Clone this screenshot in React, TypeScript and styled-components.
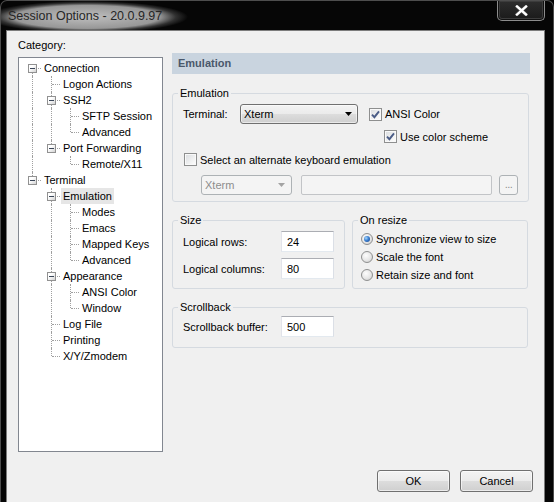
import React from 'react'
import styled, { createGlobalStyle } from 'styled-components'

type TreeNode = { label: string; selected?: boolean; children?: TreeNode[] }

type FlatRow = {
  label: string
  depth: number
  guides: boolean[]
  first: boolean
  last: boolean
  expandable: boolean
  selected: boolean
}

const tree: TreeNode[] = [
  {
    label: 'Connection',
    children: [
      { label: 'Logon Actions' },
      { label: 'SSH2', children: [{ label: 'SFTP Session' }, { label: 'Advanced' }] },
      { label: 'Port Forwarding', children: [{ label: 'Remote/X11' }] },
    ],
  },
  {
    label: 'Terminal',
    children: [
      {
        label: 'Emulation',
        selected: true,
        children: [{ label: 'Modes' }, { label: 'Emacs' }, { label: 'Mapped Keys' }, { label: 'Advanced' }],
      },
      { label: 'Appearance', children: [{ label: 'ANSI Color' }, { label: 'Window' }] },
      { label: 'Log File' },
      { label: 'Printing' },
      { label: 'X/Y/Zmodem' },
    ],
  },
]

const flatten = (nodes: TreeNode[], depth = 0, guides: boolean[] = [], out: FlatRow[] = []) => {
  nodes.forEach((node, i) => {
    const last = i === nodes.length - 1
    out.push({
      label: node.label,
      depth,
      guides,
      first: depth === 0 && i === 0,
      last,
      expandable: !!node.children,
      selected: !!node.selected,
    })
    if (node.children) flatten(node.children, depth + 1, [...guides, !last], out)
  })
  return out
}

const GlobalStyle = createGlobalStyle`
  html, body { margin: 0; padding: 0; background: #000; }
  body {
    font-family: 'Liberation Sans', Arial, sans-serif;
    font-size: 11px;
    color: #000;
  }
  * { box-sizing: border-box; }
`

const Window = styled.div`
  width: 554px;
  height: 502px;
  display: flex;
  flex-direction: column;
  background: #060606;
  border: 1px solid #4d4d4d;
  border-bottom: none;
  border-radius: 7px 7px 0 0;
  overflow: hidden;
`

const TitleBar = styled.div`
  height: 29px;
  flex: none;
  display: flex;
  align-items: flex-start;
  justify-content: space-between;
`

const Title = styled.span`
  height: 29px;
  line-height: 30px;
  padding: 0 26px 0 7px;
  font-size: 12.5px;
  color: #262626;
  background: radial-gradient(
    ellipse farthest-side at 46% 55%,
    rgba(200, 200, 200, 0.95) 0%,
    rgba(172, 172, 172, 0.88) 72%,
    rgba(100, 100, 100, 0.45) 88%,
    rgba(0, 0, 0, 0) 100%
  );
`

const CloseButton = styled.div`
  width: 48px;
  height: 21px;
  margin: -1px 8px 0 0;
  display: flex;
  align-items: center;
  justify-content: center;
  border: 1px solid #8c8c8c;
  border-top: none;
  border-radius: 0 0 5px 5px;
  background: linear-gradient(#2e2e2e, #1a1a1a);
  box-shadow: inset 0 0 0 1px #111, inset 0 0 0 2px #3c3c3c;
`

const Body = styled.div`
  flex: 1;
  display: flex;
  padding: 0 8px 0 5px;
`

const Client = styled.div`
  flex: 1;
  display: flex;
  flex-direction: column;
  padding: 0 11px;
  background: #f0f0f0;
  border: 1px solid #7c7c7c;
  border-bottom: none;
`

const Main = styled.div`
  display: flex;
  align-items: flex-start;
`

const LeftColumn = styled.div`
  width: 145px;
  display: flex;
  flex-direction: column;
`

const CategoryLabel = styled.div`
  margin-top: 8px;
  line-height: 13px;
`

const Tree = styled.div`
  margin-top: 5px;
  height: 395px;
  padding-top: 2px;
  background: #fff;
  border: 1px solid #828790;
`

const TreeRow = styled.div`
  display: flex;
  height: 16px;
  padding-left: 3px;
`

const Guide = styled.span<{ $line: boolean }>`
  position: relative;
  flex: none;
  width: 19px;
  height: 16px;
  &::before {
    content: '';
    display: ${p => (p.$line ? 'block' : 'none')};
    position: absolute;
    left: 10px;
    top: 0;
    bottom: 0;
    border-left: 1px dotted #a0a0a0;
  }
`

const Elbow = styled.span<{ $first: boolean; $last: boolean }>`
  position: relative;
  flex: none;
  width: 19px;
  height: 16px;
  &::before {
    content: '';
    position: absolute;
    left: 10px;
    top: ${p => (p.$first ? 8 : 0)}px;
    bottom: ${p => (p.$last ? 8 : 0)}px;
    border-left: 1px dotted #a0a0a0;
  }
  &::after {
    content: '';
    position: absolute;
    left: 11px;
    right: 0;
    top: 8px;
    border-top: 1px dotted #a0a0a0;
  }
`

const Expander = styled.span`
  position: absolute;
  z-index: 1;
  left: 6px;
  top: 4px;
  width: 9px;
  height: 9px;
  border: 1px solid #919191;
  background: linear-gradient(135deg, #ffffff 35%, #d2d2d2 100%);
  &::after {
    content: '';
    position: absolute;
    left: 1px;
    top: 3px;
    width: 5px;
    height: 1px;
    background: #3a4658;
  }
`

const TreeLabel = styled.span<{ $selected: boolean }>`
  margin-left: 1px;
  padding: 0 2px;
  line-height: 16px;
  white-space: nowrap;
  background: ${p => (p.$selected ? '#e6e6e6' : 'transparent')};
`

const RightColumn = styled.div`
  width: 358px;
  margin-left: 9px;
  padding-top: 22px;
  display: flex;
  flex-direction: column;
`

const PanelHeader = styled.div`
  height: 21px;
  line-height: 21px;
  padding-left: 6px;
  font-weight: bold;
  color: #4a586b;
  background: #c9d4df;
`

const Group = styled.fieldset<{ $top?: number; $width?: number }>`
  margin: ${p => p.$top ?? 12}px 0 0;
  padding: 0;
  min-width: 0;
  width: ${p => (p.$width ? `${p.$width}px` : '357px')};
  border: 1px solid #d5dae0;
  border-radius: 3px;
`

const Legend = styled.legend`
  margin-left: 5px;
  padding: 0 2px;
  line-height: 13px;
`

const GroupBody = styled.div<{ $pt: number; $pb: number; $pl?: number }>`
  padding: ${p => p.$pt}px 0 ${p => p.$pb}px ${p => p.$pl ?? 10}px;
`

const GroupRow = styled.div`
  display: flex;
  gap: 7px;
  margin-top: 12px;
`

const FieldRow = styled.div<{ $top?: number; $indent?: number; $height?: number }>`
  display: flex;
  align-items: center;
  margin-top: ${p => p.$top ?? 0}px;
  margin-left: ${p => p.$indent ?? 0}px;
  height: ${p => p.$height ?? 20}px;
`

const FieldLabel = styled.span<{ $width: number }>`
  flex: none;
  width: ${p => p.$width}px;
  white-space: nowrap;
`

const Combo = styled.div<{ $width: number; $disabled?: boolean; $gap?: number }>`
  flex: none;
  width: ${p => p.$width}px;
  height: 20px;
  margin-left: ${p => p.$gap ?? 0}px;
  display: flex;
  align-items: center;
  justify-content: space-between;
  padding: 0 ${p => (p.$disabled ? 6 : 5)}px 0 3px;
  border: 1px solid ${p => (p.$disabled ? '#adb2b5' : '#707070')};
  border-radius: 3px;
  color: ${p => (p.$disabled ? '#8d8d8d' : '#000')};
  background: ${p =>
    p.$disabled ? '#f4f4f4' : 'linear-gradient(#f3f3f3 0%, #ebebeb 50%, #dddddd 50%, #cfcfcf 100%)'};
  box-shadow: ${p => (p.$disabled ? 'none' : 'inset 0 0 0 1px rgba(255,255,255,0.55)')};
`

const CheckBox = styled.span`
  flex: none;
  width: 13px;
  height: 13px;
  display: flex;
  align-items: center;
  justify-content: center;
  border: 1px solid #8e8f8f;
  background: linear-gradient(135deg, #d9dcdf 0%, #f6f6f6 75%, #ffffff 100%);
  box-shadow: inset 0 0 0 1px #f9f9f9;
`

const OptionText = styled.span`
  margin-left: 3px;
  white-space: nowrap;
`

const Radio = styled.span<{ $checked?: boolean }>`
  flex: none;
  width: 12px;
  height: 12px;
  border-radius: 50%;
  display: flex;
  align-items: center;
  justify-content: center;
  border: 1px solid #8e8f8f;
  background: radial-gradient(circle at 40% 35%, #fdfdfd 0%, #e6e6e6 55%, #c9c9c9 100%);
  &::after {
    content: '';
    display: ${p => (p.$checked ? 'block' : 'none')};
    width: 6px;
    height: 6px;
    border-radius: 50%;
    background: radial-gradient(circle at 35% 35%, #a8d8fb 0%, #3b7fd1 45%, #123f82 100%);
  }
`

const TextBox = styled.input<{ $width: number }>`
  flex: none;
  width: ${p => p.$width}px;
  height: 21px;
  padding: 0 0 0 5px;
  font: inherit;
  color: #000;
  background: #fff;
  border: 1px solid;
  border-color: #abadb3 #dbdfe6 #e3e9ef #e2e3ea;
  outline: none;
`

const DisabledBox = styled.div<{ $width: number; $gap: number }>`
  flex: none;
  width: ${p => p.$width}px;
  height: 20px;
  margin-left: ${p => p.$gap}px;
  border: 1px solid #c2c4c7;
  border-radius: 2px;
  background: #f4f4f4;
`

const BrowseButton = styled.div`
  flex: none;
  width: 19px;
  height: 20px;
  margin-left: 7px;
  display: flex;
  align-items: center;
  justify-content: center;
  padding-bottom: 3px;
  border: 1px solid #adb2b5;
  border-radius: 3px;
  background: #f4f4f4;
  color: #8d8d8d;
  letter-spacing: -0.5px;
`

const Footer = styled.div`
  display: flex;
  justify-content: flex-end;
  gap: 10px;
  margin-top: 18px;
`

const DialogButton = styled.div`
  width: 73px;
  height: 22px;
  display: flex;
  align-items: center;
  justify-content: center;
  border: 1px solid #707070;
  border-radius: 3px;
  background: linear-gradient(#f3f3f3 0%, #ebebeb 50%, #dddddd 50%, #cfcfcf 100%);
  box-shadow: inset 0 0 0 1px rgba(255, 255, 255, 0.6);
`

const ComboArrow = ({ color }: { color: string }) => (
  <svg width="7" height="4" viewBox="0 0 7 4">
    <polygon points="0,0 7,0 3.5,4" fill={color} />
  </svg>
)

const Check = () => (
  <svg width="9" height="9" viewBox="0 0 9 9">
    <path d="M1 4.6 L3.4 7.2 L8 1.4" fill="none" stroke="#4a5c86" strokeWidth="1.9" />
  </svg>
)

const CloseGlyph = () => (
  <svg width="13" height="11" viewBox="0 0 13 11">
    <path d="M2 1.5 L11 9.5 M11 1.5 L2 9.5" stroke="#3a3a3a" strokeWidth="4" strokeLinecap="square" />
    <path d="M2 1.5 L11 9.5 M11 1.5 L2 9.5" stroke="#ffffff" strokeWidth="2.4" strokeLinecap="square" />
  </svg>
)

const Option: React.FC<{ checked?: boolean; label: string }> = ({ checked, label }) => (
  <>
    <CheckBox>{checked && <Check />}</CheckBox>
    <OptionText>{label}</OptionText>
  </>
)

const RadioOption: React.FC<{ checked?: boolean; label: string }> = ({ checked, label }) => (
  <FieldRow $height={18}>
    <Radio $checked={checked} />
    <OptionText>{label}</OptionText>
  </FieldRow>
)

const CategoryTree = () => (
  <Tree>
    {flatten(tree).map((row, i) => (
      <TreeRow key={i}>
        {row.guides.map((line, g) => (
          <Guide key={g} $line={line} />
        ))}
        <Elbow $first={row.first} $last={row.last}>
          {row.expandable && <Expander />}
        </Elbow>
        <TreeLabel $selected={row.selected}>{row.label}</TreeLabel>
      </TreeRow>
    ))}
  </Tree>
)

const App: React.FC = () => (
  <>
    <GlobalStyle />
    <Window>
      <TitleBar>
        <Title>Session Options - 20.0.9.97</Title>
        <CloseButton>
          <CloseGlyph />
        </CloseButton>
      </TitleBar>
      <Body>
        <Client>
          <Main>
            <LeftColumn>
              <CategoryLabel>Category:</CategoryLabel>
              <CategoryTree />
            </LeftColumn>
            <RightColumn>
              <PanelHeader>Emulation</PanelHeader>

              <Group $top={13}>
                <Legend>Emulation</Legend>
                <GroupBody $pt={4} $pb={6}>
                  <FieldRow>
                    <FieldLabel $width={57}>Terminal:</FieldLabel>
                    <Combo $width={118}>
                      <span>Xterm</span>
                      <ComboArrow color="#000" />
                    </Combo>
                    <FieldRow $indent={11} $height={13}>
                      <Option checked label="ANSI Color" />
                    </FieldRow>
                  </FieldRow>
                  <FieldRow $top={6} $indent={201} $height={13}>
                    <Option checked label="Use color scheme" />
                  </FieldRow>
                  <FieldRow $top={10} $indent={1} $height={13}>
                    <Option label="Select an alternate keyboard emulation" />
                  </FieldRow>
                  <FieldRow $top={9}>
                    <Combo $width={91} $gap={18} $disabled>
                      <span>Xterm</span>
                      <ComboArrow color="#a3a3a3" />
                    </Combo>
                    <DisabledBox $width={191} $gap={9} />
                    <BrowseButton>...</BrowseButton>
                  </FieldRow>
                </GroupBody>
              </Group>

              <GroupRow>
                <Group $top={0} $width={173}>
                  <Legend>Size</Legend>
                  <GroupBody $pt={4} $pb={9}>
                    <FieldRow $height={21}>
                      <FieldLabel $width={98}>Logical rows:</FieldLabel>
                      <TextBox $width={53} value="24" readOnly />
                    </FieldRow>
                    <FieldRow $top={6} $height={21}>
                      <FieldLabel $width={98}>Logical columns:</FieldLabel>
                      <TextBox $width={53} value="80" readOnly />
                    </FieldRow>
                  </GroupBody>
                </Group>
                <Group $top={0} $width={176}>
                  <Legend>On resize</Legend>
                  <GroupBody $pt={3} $pb={4} $pl={8}>
                    <RadioOption checked label="Synchronize view to size" />
                    <RadioOption label="Scale the font" />
                    <RadioOption label="Retain size and font" />
                  </GroupBody>
                </Group>
              </GroupRow>

              <Group $width={356}>
                <Legend>Scrollback</Legend>
                <GroupBody $pt={2} $pb={10}>
                  <FieldRow $height={21}>
                    <FieldLabel $width={98}>Scrollback buffer:</FieldLabel>
                    <TextBox $width={53} value="500" readOnly />
                  </FieldRow>
                </GroupBody>
              </Group>
            </RightColumn>
          </Main>
          <Footer>
            <DialogButton>OK</DialogButton>
            <DialogButton>Cancel</DialogButton>
          </Footer>
        </Client>
      </Body>
    </Window>
  </>
)

export default App
